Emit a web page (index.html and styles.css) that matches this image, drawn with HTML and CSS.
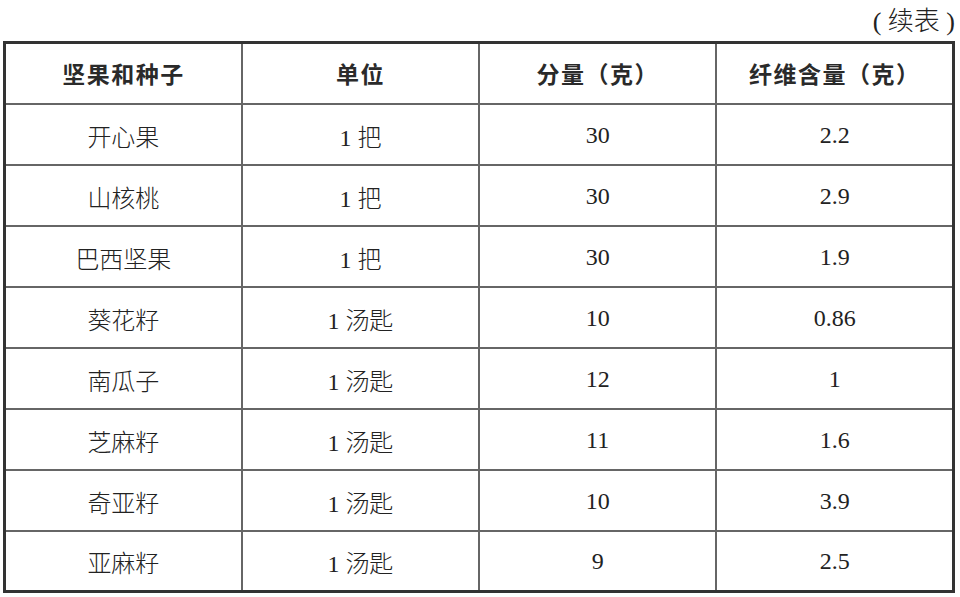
FILE: index.html
```html
<!DOCTYPE html>
<html lang="zh">
<head>
<meta charset="utf-8">
<link rel="stylesheet" href="styles.css">
</head>
<body>
<div class="page">
  <div class="caption">( 续表 )</div>
  <table class="fiber">
    <thead>
      <tr><th>坚果和种子</th><th>单位</th><th>分量（克）</th><th>纤维含量（克）</th></tr>
    </thead>
    <tbody>
      <tr><td>开心果</td><td>1 把</td><td>30</td><td>2.2</td></tr>
      <tr><td>山核桃</td><td>1 把</td><td>30</td><td>2.9</td></tr>
      <tr><td>巴西坚果</td><td>1 把</td><td>30</td><td>1.9</td></tr>
      <tr><td>葵花籽</td><td>1 汤匙</td><td>10</td><td>0.86</td></tr>
      <tr><td>南瓜子</td><td>1 汤匙</td><td>12</td><td>1</td></tr>
      <tr><td>芝麻籽</td><td>1 汤匙</td><td>11</td><td>1.6</td></tr>
      <tr><td>奇亚籽</td><td>1 汤匙</td><td>10</td><td>3.9</td></tr>
      <tr><td>亚麻籽</td><td>1 汤匙</td><td>9</td><td>2.5</td></tr>
    </tbody>
  </table>
</div>
</body>
</html>
```
FILE: styles.css
```css
html, body {
  margin: 0;
  padding: 0;
  background: #fff;
}
.page {
  width: 960px;
  padding-left: 3px;
  box-sizing: border-box;
}
.caption {
  height: 41px;
  box-sizing: border-box;
  padding-right: 5px;
  padding-top: 7px;
  text-align: right;
  font-family: "Liberation Serif", "Noto Sans CJK SC", serif;
  font-weight: 300;
  font-size: 26px;
  line-height: 30px;
  color: #222;
}
.fiber {
  width: 952px;
  table-layout: fixed;
  border-collapse: collapse;
  border: 3px solid #333;
  color: #222;
}
.fiber th, .fiber td {
  border: 2px solid #666;
  height: 61px;
  padding: 0;
  text-align: center;
  vertical-align: middle;
  box-sizing: border-box;
}
.fiber th {
  font-family: "Noto Sans CJK SC", sans-serif;
  font-weight: 700;
  font-size: 23px;
  letter-spacing: 1.5px;
  color: #2a2a2a;
}
.fiber td {
  font-family: "Liberation Serif", "Noto Sans CJK SC", serif;
  font-size: 24px;
  font-weight: 300;
  padding-top: 2px;
}
```
